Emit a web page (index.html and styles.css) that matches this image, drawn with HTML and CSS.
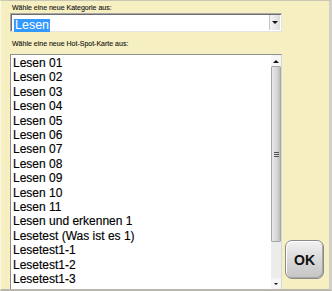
FILE: index.html
```html
<!DOCTYPE html>
<html>
<head>
    <title>Hot-Spot-Karte</title>
    <link rel="stylesheet" href="styles.css">
</head>
<body>
    <div class="window">
        <div class="label">Wähle eine neue Kategorie aus:</div>
        <div class="combo">
            <div class="combo-text"><span class="selected">Lesen</span></div>
            <div class="combo-button"><span class="arrow-down"></span></div>
        </div>
        <div class="label second">Wähle eine neue Hot-Spot-Karte aus:</div>
        <div class="row">
            <div class="listbox">
                <div class="items">
                    <div class="item">Lesen 01</div>
                    <div class="item">Lesen 02</div>
                    <div class="item">Lesen 03</div>
                    <div class="item">Lesen 04</div>
                    <div class="item">Lesen 05</div>
                    <div class="item">Lesen 06</div>
                    <div class="item">Lesen 07</div>
                    <div class="item">Lesen 08</div>
                    <div class="item">Lesen 09</div>
                    <div class="item">Lesen 10</div>
                    <div class="item">Lesen 11</div>
                    <div class="item">Lesen und erkennen 1</div>
                    <div class="item">Lesetest (Was ist es 1)</div>
                    <div class="item">Lesetest1-1</div>
                    <div class="item">Lesetest1-2</div>
                    <div class="item">Lesetest1-3</div>
                </div>
                <div class="scrollbar">
                    <div class="scroll-btn"><span class="arrow-up"></span></div>
                    <div class="thumb"><span class="grip"></span></div>
                    <div class="track"></div>
                    <div class="scroll-btn"><span class="arrow-down small"></span></div>
                </div>
            </div>
            <button class="ok">OK</button>
        </div>
    </div>
</body>
</html>
```
FILE: styles.css
```css
body {
    margin: 0;
    padding: 0;
    font-family: 'Liberation Sans', Arial, sans-serif;
}

.window {
    width: 332px;
    height: 291px;
    box-sizing: border-box;
    display: flex;
    flex-direction: column;
    padding: 3px 0 0 9px;
    background-color: #f6efc1;
    border-top: 1px solid #c9c6b4;
    border-left: 1px solid #fbf8e6;
    border-right: 3px solid #d2d0c6;
    border-bottom: 2px solid #b9b7ad;
    overflow: hidden;
}

.label {
    font-size: 7px;
    line-height: 8px;
    color: #111;
    padding-left: 2px;
    margin-bottom: 1px;
    -webkit-text-stroke: 0.1px #111;
}

.label.second {
    margin-top: 8px;
    margin-bottom: 6px;
}

.combo {
    width: 272px;
    height: 19px;
    box-sizing: border-box;
    display: flex;
    background-color: #fff;
    border: 1px solid #a9a9a9;
    border-right-color: #e4e4e4;
    border-bottom-color: #e4e4e4;
    box-shadow: inset 1px 1px 0 #6d6d6d;
}

.combo-text {
    flex: 1;
    padding: 1px 0 0 3px;
}

.selected {
    display: inline-block;
    background-color: #3399ff;
    color: #fff;
    font-size: 12.5px;
    line-height: 13px;
    padding: 0 1px;
}

.combo-button {
    width: 10px;
    margin: 1px 1px 1px 0;
    display: flex;
    align-items: center;
    justify-content: center;
    background: linear-gradient(to right, #f4f4f4, #dcdcdc);
    border-left: 1px solid #c4c4c4;
}

.arrow-down {
    width: 0;
    height: 0;
    border-left: 3px solid transparent;
    border-right: 3px solid transparent;
    border-top: 3px solid #111;
}

.arrow-down.small {
    border-left-width: 2px;
    border-right-width: 2px;
    border-top-width: 2px;
}

.arrow-up {
    width: 0;
    height: 0;
    border-left: 3px solid transparent;
    border-right: 3px solid transparent;
    border-bottom: 3px solid #111;
}

.row {
    flex: 1;
    display: flex;
    align-items: flex-end;
    gap: 3px;
}

.listbox {
    width: 272px;
    height: 100%;
    box-sizing: border-box;
    display: flex;
    background-color: #fff;
    border: 1px solid #8f8f8f;
    border-right-color: #d8d8d8;
    border-bottom: none;
    overflow: hidden;
}

.items {
    flex: 1;
    padding: 1px 0 0 2px;
}

.item {
    font-size: 12px;
    line-height: 14.4px;
    color: #000;
    white-space: nowrap;
    -webkit-text-stroke: 0.15px #000;
}

.scrollbar {
    width: 10px;
    display: flex;
    flex-direction: column;
    background-color: #f2f2f2;
}

.scroll-btn {
    height: 10px;
    margin-top: 1px;
    display: flex;
    align-items: center;
    justify-content: center;
    background-color: #f6f6f6;
}

.thumb {
    height: 176px;
    box-sizing: border-box;
    display: flex;
    align-items: center;
    justify-content: center;
    background: linear-gradient(to right, #e9e9e9, #d6d6d6 60%, #bcbcbc);
    border: 1px solid #a6a6a6;
    border-radius: 1px;
}

.grip {
    width: 5px;
    height: 1px;
    background-color: #555;
    box-shadow: 0 2px 0 #555, 0 -2px 0 #555;
}

.track {
    flex: 1;
    background-color: #ececec;
}

.ok {
    width: 39px;
    height: 39px;
    margin-bottom: 10px;
    padding: 0;
    font-family: 'Liberation Sans', Arial, sans-serif;
    font-size: 14px;
    font-weight: bold;
    color: #111;
    background: linear-gradient(to bottom, #f2f2f2, #d9d9d9 50%, #c4c4c4);
    border: 1px solid #8a8a8a;
    border-radius: 7px;
    box-shadow: inset 1px 1px 0 #fff, inset -1px -1px 0 #a8a8a8;
}
```
